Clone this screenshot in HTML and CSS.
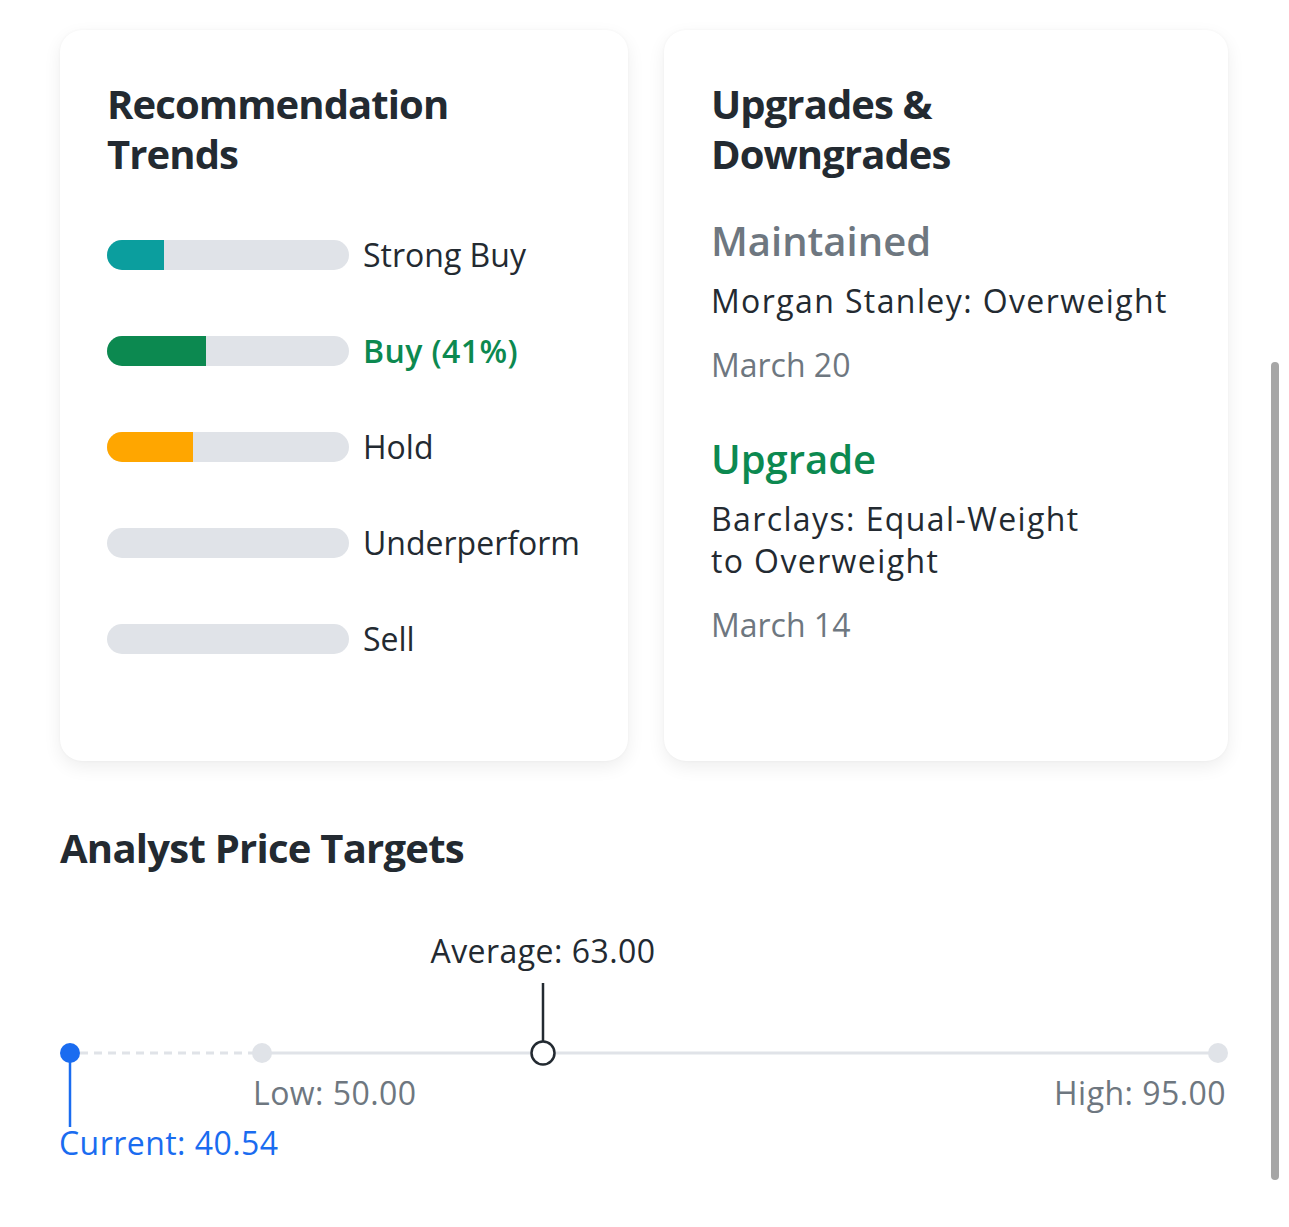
FILE: index.html
```html
<!DOCTYPE html>
<html lang="en">
<head>
<meta charset="utf-8">
<title>Analyst Insights</title>
<link rel="stylesheet" href="styles.css">
</head>
<body>
<main class="page">
  <section class="cards">
    <article class="card">
      <h2 class="card-title">Recommendation Trends</h2>
      <ul class="trends">
        <li class="trend"><span class="track"><span class="fill fill-strong" style="width:23.5%"></span></span><span class="trend-label">Strong Buy</span></li>
        <li class="trend"><span class="track"><span class="fill fill-buy" style="width:41%"></span></span><span class="trend-label trend-active">Buy (41%)</span></li>
        <li class="trend"><span class="track"><span class="fill fill-hold" style="width:35.5%"></span></span><span class="trend-label">Hold</span></li>
        <li class="trend"><span class="track"></span><span class="trend-label">Underperform</span></li>
        <li class="trend"><span class="track"></span><span class="trend-label">Sell</span></li>
      </ul>
    </article>
    <article class="card">
      <h2 class="card-title">Upgrades &amp;<br>Downgrades</h2>
      <div class="rating">
        <h3 class="rating-kind kind-maintained">Maintained</h3>
        <p class="rating-text">Morgan Stanley: Overweight</p>
        <p class="rating-date">March 20</p>
      </div>
      <div class="rating rating-next">
        <h3 class="rating-kind kind-upgrade">Upgrade</h3>
        <p class="rating-text">Barclays: Equal-Weight<br>to Overweight</p>
        <p class="rating-date">March 14</p>
      </div>
    </article>
  </section>

  <section class="targets">
    <h2 class="section-title">Analyst Price Targets</h2>
    <div class="chart">
      <svg class="chart-svg" width="1168" height="300" viewBox="0 0 1168 300" aria-hidden="true">
        <line x1="20" y1="180" x2="202" y2="180" stroke="#e0e3e8" stroke-width="3" stroke-dasharray="8 6"/>
        <line x1="202" y1="180" x2="1158" y2="180" stroke="#e0e3e8" stroke-width="3"/>
        <circle cx="202" cy="180" r="10" fill="#e0e3e8"/>
        <circle cx="1158" cy="180" r="10" fill="#e0e3e8"/>
        <line x1="483" y1="110" x2="483" y2="168" stroke="#232a31" stroke-width="2.5"/>
        <circle cx="483" cy="180" r="11.5" fill="#fff" stroke="#232a31" stroke-width="2.5"/>
        <line x1="10" y1="180" x2="10" y2="254" stroke="#1a6cf0" stroke-width="2.5"/>
        <circle cx="10" cy="180" r="10" fill="#1a6cf0"/>
      </svg>
      <span class="chart-label label-avg">Average: 63.00</span>
      <span class="chart-label label-low">Low: 50.00</span>
      <span class="chart-label label-high">High: 95.00</span>
      <span class="chart-label label-current">Current: 40.54</span>
    </div>
  </section>
  <div class="scrollbar" aria-hidden="true"></div>
</main>
</body>
</html>
```
FILE: styles.css
```css
* { box-sizing: border-box; }

html, body {
  margin: 0;
  padding: 0;
  background: #ffffff;
}

body {
  font-family: "Open Sans", "Noto Sans", "Liberation Sans", sans-serif;
  color: #232a31;
  width: 1289px;
  height: 1227px;
  overflow: hidden;
}

.page {
  position: relative;
  padding: 30px 61px 0 60px;
  height: 1227px;
}

.cards {
  display: grid;
  grid-template-columns: 1fr 1fr;
  gap: 36px;
}

.card {
  height: 731px;
  background: #fff;
  border-radius: 22px;
  box-shadow: 0 6px 18px rgba(0, 0, 0, 0.07), 0 0 3px rgba(0, 0, 0, 0.04);
  padding: 49px 48px 48px 47px;
}

.card-title {
  margin: 0;
  font-size: 40px;
  line-height: 50px;
  font-weight: 700;
  letter-spacing: -0.9px;
  color: #232a31;
}

.trends {
  list-style: none;
  margin: 52px 0 0 0;
  padding: 0;
  display: flex;
  flex-direction: column;
  gap: 48px;
}

.trend {
  display: flex;
  align-items: center;
  height: 48px;
  gap: 14px;
}

.track {
  display: block;
  flex: 0 0 242px;
  height: 30px;
  border-radius: 15px;
  background: #e0e3e8;
  overflow: hidden;
}

.fill {
  display: block;
  height: 100%;
}

.fill-strong { background: #0b9e9e; }
.fill-buy { background: #0c8950; }
.fill-hold { background: #ffa600; }

.trend-label {
  font-size: 32px;
  line-height: 48px;
  color: #232a31;
  white-space: nowrap;
}

.trend-active {
  color: #0c8950;
  font-weight: 600;
  letter-spacing: 0.4px;
}

.rating { margin-top: 37px; }
.rating-next { margin-top: 48px; }

.rating-kind {
  margin: 0;
  font-size: 40px;
  line-height: 50px;
  font-weight: 600;
}

.kind-maintained { color: #6e7780; }
.kind-upgrade { color: #0c8950; }

.rating-text {
  margin: 14px 0 0 0;
  font-size: 32px;
  line-height: 42px;
  letter-spacing: 1.4px;
  color: #232a31;
}

.rating-date {
  margin: 22px 0 0 0;
  font-size: 32px;
  line-height: 42px;
  color: #6e7780;
}

.targets { margin-top: 62px; }

.section-title {
  margin: 0;
  font-size: 40px;
  line-height: 50px;
  font-weight: 700;
  letter-spacing: -0.75px;
}

.chart {
  position: relative;
  height: 300px;
}

.chart-svg {
  position: absolute;
  left: 0;
  top: 0;
}

.chart-label {
  position: absolute;
  font-size: 32px;
  line-height: 42px;
  letter-spacing: 0.45px;
  white-space: nowrap;
}

.label-avg {
  top: 57px;
  left: 483px;
  transform: translateX(-50%);
  color: #232a31;
}

.label-low {
  top: 199px;
  left: 193px;
  color: #6e7780;
}

.label-high {
  top: 199px;
  right: 2px;
  color: #6e7780;
}

.label-current {
  top: 249px;
  left: -1px;
  color: #1a6cf0;
}

.scrollbar {
  position: absolute;
  left: 1271px;
  top: 362px;
  width: 8px;
  height: 818px;
  border-radius: 4px;
  background: #a6a6a6;
}
```
